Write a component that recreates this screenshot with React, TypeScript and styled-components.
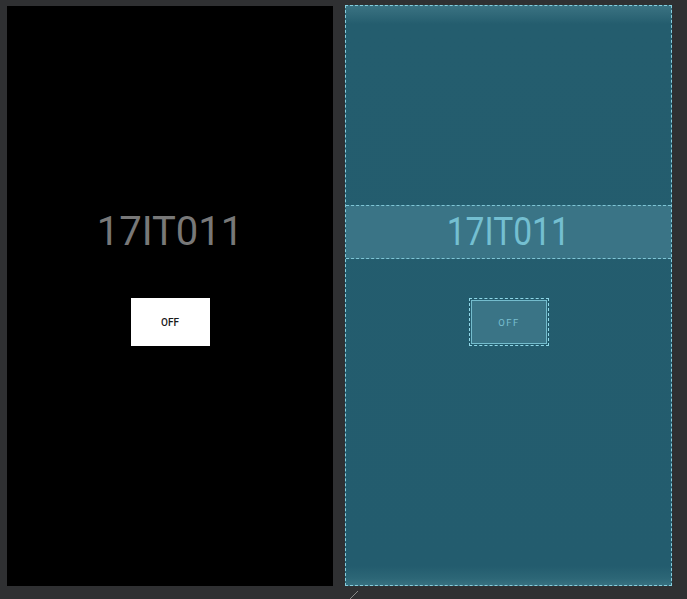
import React from "react";
import styled, { createGlobalStyle } from "styled-components";

const Global = createGlobalStyle`
  html, body { margin: 0; padding: 0; background: #2f3032; }
  body { width: 687px; height: 599px; overflow: hidden; font-family: Roboto, "Liberation Sans", sans-serif; }
`;

const Canvas = styled.div`
  position: relative;
  width: 687px;
  height: 599px;
  display: flex;
  align-items: flex-start;
  gap: 12px;
  padding: 5px 0 0 7px;
  box-sizing: border-box;
`;

const DesignScreen = styled.div`
  margin-top: 1px;
  width: 326px;
  height: 580px;
  background: #000;
  display: flex;
  flex-direction: column;
  align-items: center;
  padding-top: 199px;
  box-sizing: border-box;
`;

const BlueprintScreen = styled.div`
  width: 327px;
  height: 581px;
  box-sizing: border-box;
  border: 1px dashed #86cfdf;
  background: linear-gradient(
    to bottom,
    #3a7282 0px,
    #316979 8px,
    #245d6e 18px,
    #235c6e 560px,
    #2c6676 572px,
    #3a7383 581px
  );
  display: flex;
  flex-direction: column;
  align-items: center;
  padding-top: 199px;
`;

const Title = styled.div<{ $blueprint?: boolean }>`
  align-self: stretch;
  height: 54px;
  box-sizing: border-box;
  display: flex;
  align-items: center;
  justify-content: center;
  font-family: Roboto, "Liberation Sans", sans-serif;
  font-size: 40px;
  font-weight: 400;
  color: ${(p) => (p.$blueprint ? "#74bfd1" : "#787878")};
  background: ${(p) => (p.$blueprint ? "#3a7486" : "transparent")};
  border-top: 1px dashed ${(p) => (p.$blueprint ? "#7fc6d6" : "transparent")};
  border-bottom: 1px dashed ${(p) => (p.$blueprint ? "#7fc6d6" : "transparent")};
  padding-bottom: 1px;
`;

const TitleText = styled.span<{ $narrow?: boolean }>`
  display: inline-block;
  transform: ${(p) => (p.$narrow ? "scale(0.84, 0.95)" : "none")};
  margin-top: ${(p) => (p.$narrow ? "2px" : "0")};
`;

const DesignButton = styled.div`
  margin-top: 39px;
  width: 79px;
  height: 48px;
  background: #fff;
  display: flex;
  align-items: center;
  justify-content: center;
  font-family: Roboto, "Liberation Sans", sans-serif;
  font-size: 10px;
  font-weight: 500;
  color: #1a1a1a;
`;

const BlueprintButton = styled.div`
  margin-top: 39px;
  width: 80px;
  height: 48px;
  box-sizing: border-box;
  border: 1px dashed #8fd8e8;
  padding: 1px;
  display: flex;
`;

const BlueprintButtonInner = styled.div`
  flex: 1;
  border: 1px solid #74bccd;
  background: #3a7486;
  display: flex;
  align-items: center;
  justify-content: center;
  font-family: Roboto, "Liberation Sans", sans-serif;
  font-size: 9.5px;
  letter-spacing: 1.5px;
  color: #78bfd0;
  padding-left: 1px;
`;

const ResizeHandle = styled.svg`
  position: absolute;
  left: 349px;
  top: 590px;
`;

export default function App() {
  return (
    <>
      <Global />
      <Canvas>
        <DesignScreen>
          <Title>
            <TitleText>17IT011</TitleText>
          </Title>
          <DesignButton>OFF</DesignButton>
        </DesignScreen>
        <BlueprintScreen>
          <Title $blueprint>
            <TitleText $narrow>17IT011</TitleText>
          </Title>
          <BlueprintButton>
            <BlueprintButtonInner>OFF</BlueprintButtonInner>
          </BlueprintButton>
        </BlueprintScreen>
        <ResizeHandle width="10" height="10" viewBox="0 0 10 10">
          <line x1="1" y1="9" x2="9" y2="1" stroke="#8a8a8a" strokeWidth="1" />
        </ResizeHandle>
      </Canvas>
    </>
  );
}
